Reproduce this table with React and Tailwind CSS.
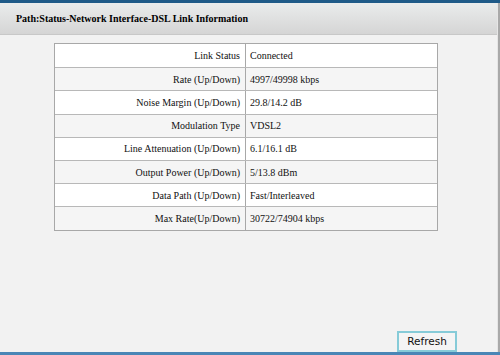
import React from "react";

const rows = [
  ["Link Status", "Connected"],
  ["Rate (Up/Down)", "4997/49998 kbps"],
  ["Noise Margin (Up/Down)", "29.8/14.2 dB"],
  ["Modulation Type", "VDSL2"],
  ["Line Attenuation (Up/Down)", "6.1/16.1 dB"],
  ["Output Power (Up/Down)", "5/13.8 dBm"],
  ["Data Path (Up/Down)", "Fast/Interleaved"],
  ["Max Rate(Up/Down)", "30722/74904 kbps"],
];

export default function App() {
  return (
    <div className="w-[500px] h-[355px] flex flex-col bg-[#f2f2f2] overflow-hidden font-['Liberation_Serif',serif]">
      <div className="h-[3px] bg-[#1f5a88] shrink-0" />
      <div className="flex flex-1 min-h-0">
        <div className="flex-1 flex flex-col min-w-0">
          <div className="h-[32px] shrink-0 flex items-center pl-[16px] bg-gradient-to-b from-[#eaecec] to-[#d5d5d5] border-b border-[#c8c8c8]">
            <span className="text-[10px] font-bold text-black">Path:Status-Network Interface-DSL Link Information</span>
          </div>
          <div className="flex-1 flex flex-col pt-[8px] pl-[54px]">
            <div className="w-[384px] border border-[#a8a8a8] flex flex-col">
              {rows.map(([k, v], i) => (
                <div
                  key={k}
                  className={`flex h-[23.2px] text-[10px] text-[#111] ${i > 0 ? "border-t border-[#b8b8b8]" : ""} ${i % 2 === 1 ? "bg-[#f5f5f5]" : "bg-white"}`}
                >
                  <div className="w-[191px] shrink-0 flex items-center justify-end pr-[5px] border-r border-[#a8a8a8]">{k}</div>
                  <div className="flex-1 flex items-center pl-[4px]">{v}</div>
                </div>
              ))}
            </div>
            <div className="flex-1" />
            <div className="flex justify-end pr-[40px]">
              <button className="w-[60px] h-[21px] border-2 border-[#86cbd8] bg-[#f4f4f4] text-[10.5px] text-[#111] flex items-center justify-center leading-none font-['DejaVu_Sans',sans-serif]">
                Refresh
              </button>
            </div>
          </div>
        </div>
        <div className="w-[1px] bg-[#e6e6e6]" />
        <div className="w-[2px] bg-[#a9a9a9]" />
      </div>
      <div className="h-[3px] bg-[#4a86b6] shrink-0" />
    </div>
  );
}
